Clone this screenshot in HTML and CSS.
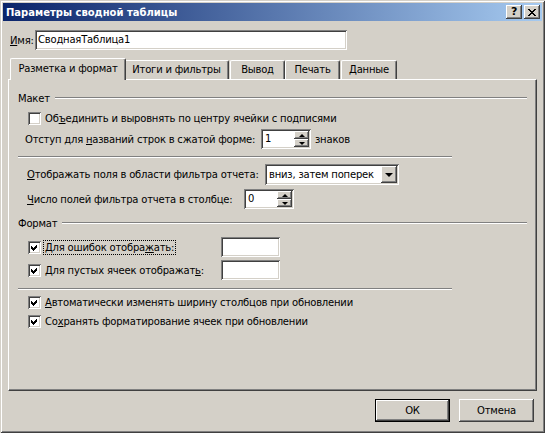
FILE: index.html
```html
<!DOCTYPE html>
<html lang="ru">
<head>
    <meta charset="UTF-8">
    <title>Параметры сводной таблицы</title>
    <link rel="stylesheet" href="styles.css">
</head>
<body>
<div class="window">
    <div class="titlebar">
        <span class="title">Параметры сводной таблицы</span>
        <div class="caption-buttons">
            <span class="cap-btn help">?</span>
            <span class="cap-btn">
                <svg width="8" height="7" viewBox="0 0 8 7" shape-rendering="crispEdges"><path d="M0 0h2v1h-2zM6 0h2v1h-2zM1 1h2v1h-2zM5 1h2v1h-2zM2 2h4v1h-4zM3 3h2v1h-2zM2 4h4v1h-4zM1 5h2v1h-2zM5 5h2v1h-2zM0 6h2v1h-2zM6 6h2v1h-2z" fill="#000"/></svg>
            </span>
        </div>
    </div>

    <div class="content">
        <div class="name-row">
            <label class="name-label"><u>И</u>мя:</label>
            <div class="field name-field">СводнаяТаблица1</div>
        </div>

        <div class="tabs">
            <div class="tab active">Разметка и формат</div>
            <div class="tab tab-totals">Итоги и фильтры</div>
            <div class="tab tab-output">Вывод</div>
            <div class="tab tab-print">Печать</div>
            <div class="tab tab-data">Данные</div>
        </div>

        <div class="panel">
            <div class="group group-layout"><span>Макет</span><i class="etch"></i></div>

            <div class="row row-merge">
                <span class="checkbox"></span>
                <span class="cb-text">Об<u>ъ</u>единить и выровнять по центру ячейки с подписями</span>
            </div>

            <div class="row row-indent">
                <span class="label label-indent">Отступ для <u>н</u>азваний строк в сжатой форме:</span>
                <div class="spinner spinner-indent">
                    <span class="spin-value">1</span>
                    <span class="spin-buttons">
                        <span class="spin-btn"><i class="tri-up"></i></span>
                        <span class="spin-btn"><i class="tri-down"></i></span>
                    </span>
                </div>
                <span class="suffix">знаков</span>
            </div>

            <div class="sep sep-1"></div>

            <div class="row row-order">
                <span class="label label-order"><u>О</u>тображать поля в области фильтра отчета:</span>
                <div class="combo">
                    <span class="combo-value">вниз, затем поперек</span>
                    <span class="combo-btn"><i class="tri-combo"></i></span>
                </div>
            </div>

            <div class="row row-count">
                <span class="label label-count"><u>Ч</u>исло полей фильтра отчета в столбце:</span>
                <div class="spinner spinner-count">
                    <span class="spin-value">0</span>
                    <span class="spin-buttons">
                        <span class="spin-btn"><i class="tri-up"></i></span>
                        <span class="spin-btn"><i class="tri-down"></i></span>
                    </span>
                </div>
            </div>

            <div class="group group-format"><span>Формат</span><i class="etch"></i></div>

            <div class="row row-errors">
                <span class="checkbox checked"><svg width="13" height="13" viewBox="0 0 13 13" shape-rendering="crispEdges"><path d="M3 5L5 7L9 3L9 6L5 10L3 8Z" fill="#000"/></svg></span>
                <span class="cb-text cb-fixed"><span class="focus">Для ошибок отобра<u>ж</u>ать:</span></span>
                <div class="field small-field"></div>
            </div>

            <div class="row row-empty">
                <span class="checkbox checked"><svg width="13" height="13" viewBox="0 0 13 13" shape-rendering="crispEdges"><path d="M3 5L5 7L9 3L9 6L5 10L3 8Z" fill="#000"/></svg></span>
                <span class="cb-text cb-fixed">Для пустых ячеек отображат<u>ь</u>:</span>
                <div class="field small-field"></div>
            </div>

            <div class="sep sep-2"></div>

            <div class="row row-auto">
                <span class="checkbox checked"><svg width="13" height="13" viewBox="0 0 13 13" shape-rendering="crispEdges"><path d="M3 5L5 7L9 3L9 6L5 10L3 8Z" fill="#000"/></svg></span>
                <span class="cb-text"><u>А</u>втоматически изменять ширину столбцов при обновлении</span>
            </div>

            <div class="row row-keep">
                <span class="checkbox checked"><svg width="13" height="13" viewBox="0 0 13 13" shape-rendering="crispEdges"><path d="M3 5L5 7L9 3L9 6L5 10L3 8Z" fill="#000"/></svg></span>
                <span class="cb-text">Со<u>х</u>ранять форматирование ячеек при обновлении</span>
            </div>
        </div>

        <div class="buttons">
            <button class="btn default">ОК</button>
            <button class="btn">Отмена</button>
        </div>
    </div>
</div>
</body>
</html>
```

FILE: styles.css
```css
body {
    margin: 0;
    background: #D4D0C8;
    font-family: "DejaVu Sans", sans-serif;
    font-size: 10px;
    letter-spacing: -0.2px;
    color: #000;
}

u {
    text-decoration: underline;
    text-underline-offset: 1px;
}

.window {
    width: 545px;
    height: 433px;
    box-sizing: border-box;
    padding: 3px;
    background: #D4D0C8;
    box-shadow: inset 1px 1px #D4D0C8, inset -1px -1px #404040,
                inset 2px 2px #fff, inset -2px -2px #808080;
}

/* title bar */
.titlebar {
    height: 18px;
    display: flex;
    align-items: center;
    justify-content: space-between;
    padding: 0 2px 0 3px;
    background: linear-gradient(to right, #0A246A, #A6CAF0);
}

.title {
    color: #fff;
    font-weight: bold;
    font-size: 10px;
    letter-spacing: 0;
}

.caption-buttons {
    display: flex;
    gap: 2px;
}

.cap-btn {
    width: 16px;
    height: 14px;
    box-sizing: border-box;
    background: #D4D0C8;
    box-shadow: inset -1px -1px #404040, inset 1px 1px #fff, inset -2px -2px #808080;
    display: flex;
    align-items: center;
    justify-content: center;
}

.cap-btn.help {
    font-weight: bold;
    font-size: 11px;
    line-height: 14px;
}

.content {
    padding: 0 5px;
}

/* name */
.name-row {
    display: flex;
    align-items: center;
    margin-top: 9px;
    padding-left: 2px;
    height: 20px;
}

.name-label {
    width: 25px;
}

.field {
    box-sizing: border-box;
    background: #fff;
    box-shadow: inset 1px 1px #808080, inset -1px -1px #fff,
                inset 2px 2px #404040, inset -2px -2px #D4D0C8;
}

.name-field {
    width: 312px;
    height: 20px;
    line-height: 20px;
    padding-left: 3px;
}

/* tabs */
.tabs {
    display: flex;
    align-items: flex-end;
    margin-top: 8px;
    padding-left: 4px;
    height: 21px;
}

.tab {
    height: 19px;
    box-sizing: border-box;
    text-align: center;
    line-height: 18px;
    white-space: nowrap;
    border-top: 1px solid #fff;
    border-left: 1px solid #fff;
    border-right: 1px solid #404040;
    border-radius: 2px 2px 0 0;
    box-shadow: inset -1px 0 #808080;
}

.tab.active {
    position: relative;
    z-index: 1;
    width: 116px;
    height: 22px;
    margin: 0 -2px -1px;
    line-height: 19px;
    background: #D4D0C8;
}

.tab-totals { width: 105px; }
.tab-output { width: 55px; margin-left: 1px; }
.tab-print { width: 55px; }
.tab-data { width: 56px; margin-left: 1px; }

/* panel */
.panel {
    height: 312px;
    box-sizing: border-box;
    padding: 0 9px;
    border-top: 1px solid #fff;
    border-left: 1px solid #fff;
    border-right: 1px solid #404040;
    border-bottom: 1px solid #404040;
    box-shadow: inset -1px -1px #808080;
}

.group {
    display: flex;
    align-items: center;
    height: 16px;
}

.etch {
    flex: 1;
    margin-left: 5px;
    height: 0;
    border-top: 1px solid #808080;
    border-bottom: 1px solid #fff;
}

.group-layout { margin-top: 10px; }
.group-format { margin-top: 6px; }

.row {
    display: flex;
    align-items: center;
    height: 16px;
    white-space: nowrap;
}

.row-merge { margin-top: 4px; padding-left: 10px; }
.row-indent { margin-top: 3px; height: 20px; padding-left: 7px; }
.row-order { margin-top: 6px; height: 21px; padding-left: 9px; }
.row-count { margin-top: 4px; height: 20px; padding-left: 9px; }
.row-errors { margin-top: 6px; height: 20px; padding-left: 10px; }
.row-empty { margin-top: 3px; height: 20px; padding-left: 10px; }
.row-auto { margin-top: 4px; padding-left: 10px; }
.row-keep { margin-top: 3px; padding-left: 10px; }

.sep {
    width: 434px;
    height: 0;
    border-top: 1px solid #808080;
    border-bottom: 1px solid #fff;
}

.sep-1 { margin-top: 7px; }
.sep-2 { margin-top: 8px; }

.checkbox {
    width: 13px;
    height: 13px;
    flex: none;
    box-sizing: border-box;
    background: #fff;
    box-shadow: inset 1px 1px #808080, inset -1px -1px #fff,
                inset 2px 2px #404040, inset -2px -2px #D4D0C8;
}

.checkbox svg {
    display: block;
}

.cb-text {
    margin-left: 4px;
}

.cb-fixed {
    flex: none;
    width: 176px;
}

.focus {
    outline: 1px dotted #000;
    outline-offset: 1px;
}

.label {
    flex: none;
}

.label-indent { min-width: 236px; }
.label-order { min-width: 238px; }
.label-count { min-width: 217px; }

/* spinner */
.spinner {
    display: flex;
    flex: none;
    height: 20px;
    box-sizing: border-box;
    padding: 2px;
    background: #fff;
    box-shadow: inset 1px 1px #808080, inset -1px -1px #fff,
                inset 2px 2px #404040, inset -2px -2px #D4D0C8;
}

.spinner-indent { width: 50px; }
.spinner-count { width: 50px; }

.spin-value {
    flex: 1;
    line-height: 16px;
    padding-left: 2px;
}

.spin-buttons {
    display: flex;
    flex-direction: column;
    width: 15px;
}

.spin-btn {
    flex: 1;
    display: flex;
    align-items: center;
    justify-content: center;
    background: #D4D0C8;
    box-shadow: inset -1px -1px #404040, inset 1px 1px #fff, inset -2px -2px #808080;
}

.tri-up {
    width: 0;
    height: 0;
    border-left: 3px solid transparent;
    border-right: 3px solid transparent;
    border-bottom: 3px solid #000;
}

.tri-down {
    width: 0;
    height: 0;
    border-left: 3px solid transparent;
    border-right: 3px solid transparent;
    border-top: 3px solid #000;
}

.suffix {
    margin-left: 4px;
}

/* combo */
.combo {
    display: flex;
    flex: none;
    width: 134px;
    height: 21px;
    box-sizing: border-box;
    padding: 2px;
    background: #fff;
    box-shadow: inset 1px 1px #808080, inset -1px -1px #fff,
                inset 2px 2px #404040, inset -2px -2px #D4D0C8;
}

.combo-value {
    flex: 1;
    line-height: 17px;
    padding-left: 2px;
}

.combo-btn {
    width: 16px;
    display: flex;
    align-items: center;
    justify-content: center;
    background: #D4D0C8;
    box-shadow: inset -1px -1px #404040, inset 1px 1px #fff, inset -2px -2px #808080;
}

.tri-combo {
    width: 0;
    height: 0;
    border-left: 4px solid transparent;
    border-right: 4px solid transparent;
    border-top: 4px solid #000;
}

.small-field {
    flex: none;
    width: 59px;
    height: 20px;
}

/* buttons */
.buttons {
    display: flex;
    justify-content: flex-end;
    gap: 9px;
    margin-top: 8px;
    padding-right: 3px;
}

.btn {
    width: 75px;
    height: 23px;
    padding: 0;
    border: none;
    background: #D4D0C8;
    font-family: "DejaVu Sans", sans-serif;
    font-size: 10px;
    letter-spacing: -0.2px;
    color: #000;
    box-shadow: inset -1px -1px #404040, inset 1px 1px #fff, inset -2px -2px #808080;
}

.btn.default {
    box-shadow: inset 0 0 0 1px #000, inset -2px -2px #404040,
                inset 2px 2px #fff, inset -3px -3px #808080;
}
```
